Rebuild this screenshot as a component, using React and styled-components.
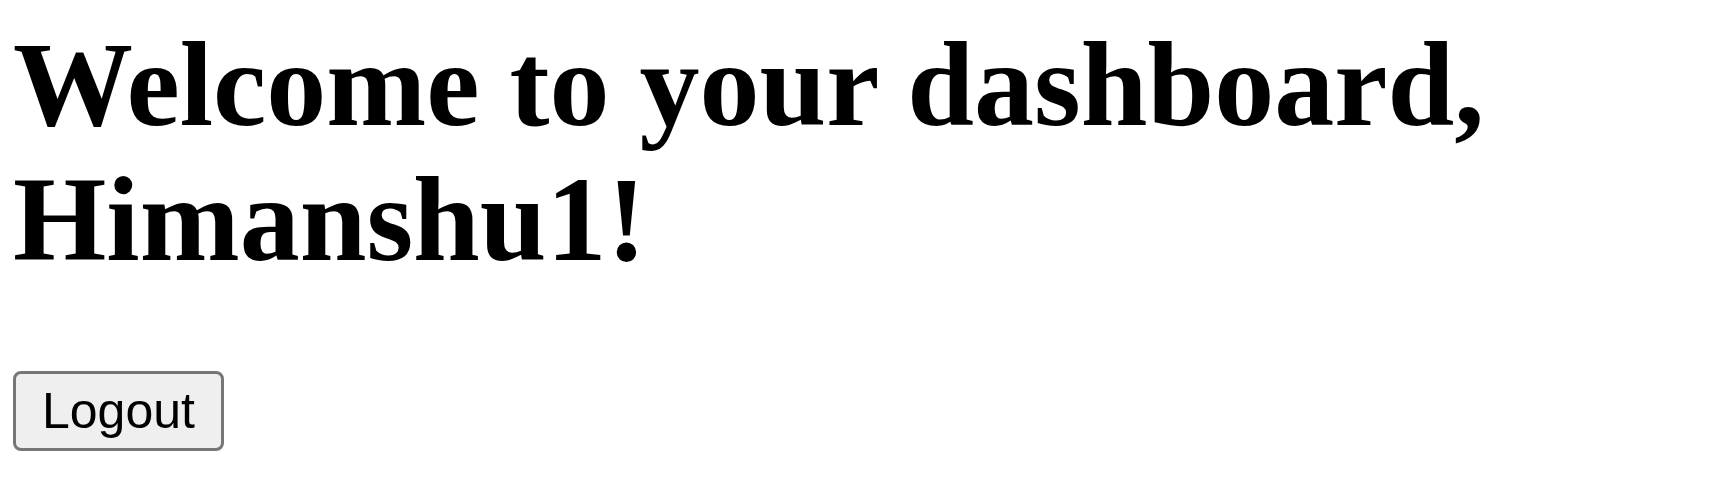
import React from "react";
import styled, { createGlobalStyle } from "styled-components";

const Global = createGlobalStyle`
  html, body { margin: 0; padding: 0; background: #ffffff; }
  body { font-family: "Liberation Serif", "Times New Roman", serif; color: #000; }
`;

const Page = styled.main`
  padding: 8px 13px;
  display: flex;
  flex-direction: column;
  align-items: flex-start;
`;

const Heading = styled.h1`
  font-family: "Liberation Serif", "Times New Roman", serif;
  font-weight: 700;
  font-size: 120px;
  line-height: 135px;
  margin: 9px 0 84px;
`;

const LogoutButton = styled.button`
  font-family: "Liberation Sans", Arial, sans-serif;
  font-size: 50px;
  line-height: normal;
  color: #000;
  background: #efefef;
  border: 3px solid #767676;
  border-radius: 8px;
  padding: 8px 26px;
  cursor: pointer;
`;

export default function App() {
  return (
    <>
      <Global />
      <Page>
        <Heading>Welcome to your dashboard, Himanshu1!</Heading>
        <LogoutButton type="button">Logout</LogoutButton>
      </Page>
    </>
  );
}
